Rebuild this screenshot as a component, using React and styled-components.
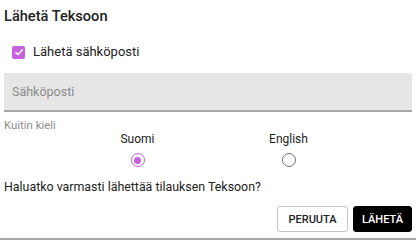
import React, { useState } from "react";
import styled, { createGlobalStyle } from "styled-components";

const Global = createGlobalStyle`
  html, body { margin: 0; padding: 0; background: #fff; }
  body { font-family: Roboto, "Noto Sans", sans-serif; color: #212121; }
  * { box-sizing: border-box; }
`;

const Dialog = styled.div`
  width: 416px;
  height: 240px;
  display: flex;
  flex-direction: column;
  border-bottom: 2px solid #a8a8a8;
  overflow: hidden;
`;

const Title = styled.h2`
  margin: 0;
  padding: 6px 4px 0 4px;
  font-size: 14.6px;
  font-weight: 500;
  line-height: 20px;
  color: #222;
`;

const CheckRow = styled.label`
  display: flex;
  align-items: center;
  gap: 8px;
  padding: 18px 0 0 12px;
  font-size: 13px;
  line-height: 16px;
  color: #222;
`;

const Box = styled.span`
  width: 13px;
  height: 13px;
  border-radius: 2px;
  background: #c560df;
  display: flex;
  align-items: center;
  justify-content: center;
`;

const Field = styled.div`
  margin: 13px 4px 0 4px;
  height: 39px;
  background: #e6e6e6;
  border-radius: 0 3px 0 0;
  border-bottom: 2px solid #a9a9a9;
  display: flex;
  align-items: center;
  padding: 0 8px;
  font-size: 12.5px;
  color: #8a8a8a;
`;

const SmallLabel = styled.div`
  padding: 6px 4px 0 4px;
  font-size: 11.4px;
  line-height: 14px;
  color: #8d8d8d;
`;

const RadioGroup = styled.div`
  display: flex;
  justify-content: center;
  padding-left: 10px;
`;

const RadioCol = styled.label`
  width: 151px;
  display: flex;
  flex-direction: column;
  align-items: center;
  gap: 7px;
  font-size: 12px;
  line-height: 14px;
  color: #222;
`;

const Radio = styled.span`
  width: 14px;
  height: 14px;
  border-radius: 50%;
  border: 1.6px solid ${(p) => (p.$on ? "#c560df" : "#707070")};
  display: flex;
  align-items: center;
  justify-content: center;
  &::after {
    content: "";
    width: 7px;
    height: 7px;
    border-radius: 50%;
    background: ${(p) => (p.$on ? "#c560df" : "transparent")};
  }
`;

const Question = styled.p`
  margin: 0;
  padding: 12px 4px 0 4px;
  font-size: 12.4px;
  line-height: 16px;
  color: #222;
`;

const Actions = styled.div`
  display: flex;
  justify-content: flex-end;
  gap: 5px;
  padding: 11px 4px 0 0;
`;

const Button = styled.button`
  height: 26px;
  padding: 0 ${(p) => (p.$primary ? "8px" : "10.5px")};
  border-radius: 3px;
  font-family: Roboto, sans-serif;
  font-size: 11px;
  font-weight: 500;
  background: ${(p) => (p.$primary ? "#000" : "#fff")};
  color: ${(p) => (p.$primary ? "#fff" : "#222")};
  border: 1px solid ${(p) => (p.$primary ? "#000" : "#c4c4c4")};
`;

export default function App() {
  const [lang, setLang] = useState("fi");
  return (
    <Dialog>
      <Global />
      <Title>Lähetä Teksoon</Title>
      <CheckRow>
        <Box>
          <svg width="10" height="10" viewBox="0 0 10 10">
            <path d="M1.5 5.2 L4 7.5 L8.6 2.6" fill="none" stroke="#fff" strokeWidth="1.5" />
          </svg>
        </Box>
        Lähetä sähköposti
      </CheckRow>
      <Field>Sähköposti</Field>
      <SmallLabel>Kuitin kieli</SmallLabel>
      <RadioGroup>
        <RadioCol onClick={() => setLang("fi")}>
          Suomi
          <Radio $on={lang === "fi"} />
        </RadioCol>
        <RadioCol onClick={() => setLang("en")}>
          English
          <Radio $on={lang === "en"} />
        </RadioCol>
      </RadioGroup>
      <Question>Haluatko varmasti lähettää tilauksen Teksoon?</Question>
      <Actions>
        <Button>PERUUTA</Button>
        <Button $primary>LÄHETÄ</Button>
      </Actions>
    </Dialog>
  );
}
